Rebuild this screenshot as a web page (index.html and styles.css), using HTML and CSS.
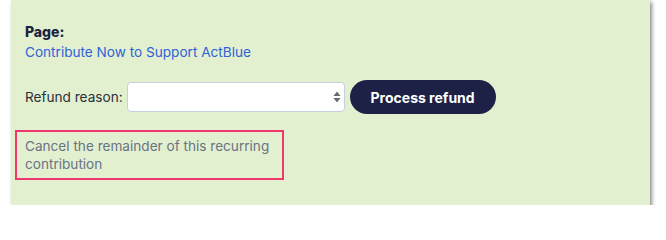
FILE: index.html
```html
<!DOCTYPE html>
<html lang="en">
<head>
<meta charset="utf-8">
<title>Refund</title>
<link rel="stylesheet" href="styles.css">
</head>
<body>
<div class="card">
  <div class="field">
    <div class="label-strong">Page:</div>
    <a class="link" href="#">Contribute Now to Support ActBlue</a>
  </div>
  <form class="refund-row">
    <label class="refund-label" for="reason">Refund reason:</label>
    <div class="select-wrap">
      <select id="reason" class="select"><option></option></select>
      <svg class="select-arrows" width="8" height="12" viewBox="0 0 8 12" aria-hidden="true">
        <path d="M4 0.5 L7.5 5 L0.5 5 Z" fill="#6a6a6a"/>
        <path d="M4 11.5 L7.5 7 L0.5 7 Z" fill="#6a6a6a"/>
      </svg>
    </div>
    <button type="button" class="btn">Process refund</button>
  </form>
  <div class="cancel-box">Cancel the remainder of this recurring contribution</div>
</div>
</body>
</html>
```

FILE: styles.css
```css
html, body {
  margin: 0;
  padding: 0;
  background: #ffffff;
}
body {
  font-family: Inter, "Noto Sans", "Liberation Sans", sans-serif;
  font-size: 13.6px;
  line-height: 20px;
  color: #1f2937;
}
.card {
  margin-left: 11px;
  width: 639px;
  height: 205px;
  box-sizing: border-box;
  background: #e2f0cf;
  padding: 22px 0 0 14px;
  box-shadow: 2px 2px 4px rgba(0, 0, 0, 0.45);
}
.field {
  display: flex;
  flex-direction: column;
}
.label-strong {
  font-weight: 800;
  font-size: 14px;
  color: #1c2340;
}
.link {
  color: #2e62d9;
  text-decoration: none;
}
.refund-row {
  display: flex;
  align-items: center;
  margin: 18px 0 0 0;
  height: 34px;
}
.refund-label {
  color: #2a2f3a;
  margin-right: 4px;
}
.select-wrap {
  position: relative;
  width: 218px;
  height: 30px;
}
.select {
  appearance: none;
  -webkit-appearance: none;
  width: 100%;
  height: 100%;
  box-sizing: border-box;
  border: 1px solid #c6cfe0;
  border-radius: 4px;
  background: #ffffff;
  margin: 0;
  font: inherit;
}
.select-arrows {
  position: absolute;
  right: 4px;
  top: 9px;
}
.btn {
  margin-left: 5px;
  height: 34px;
  width: 146px;
  border: none;
  border-radius: 17px;
  background: #1c2145;
  color: #ffffff;
  font-family: Inter, "Noto Sans", "Liberation Sans", sans-serif;
  font-size: 14px;
  font-weight: 700;
  padding: 0;
}
.cancel-box {
  margin: 16px 0 0 -10px;
  width: 269px;
  box-sizing: border-box;
  border: 2px solid #f0386e;
  padding: 5px 8px;
  line-height: 18px;
  color: #687385;
}
```
